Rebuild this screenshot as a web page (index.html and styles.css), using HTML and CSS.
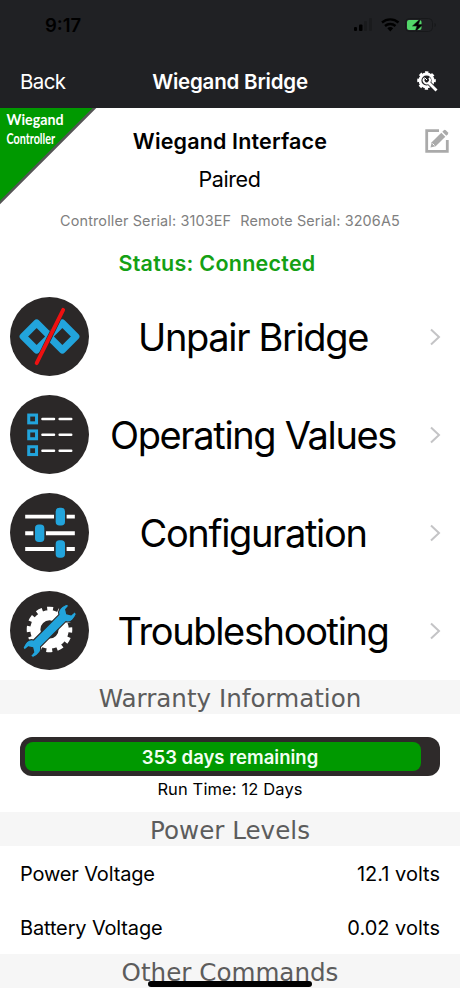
FILE: index.html
```html
<!DOCTYPE html>
<html lang="en">
<head>
    <meta charset="UTF-8">
    <meta name="viewport" content="width=device-width, initial-scale=1.0">
    <title>Wiegand Bridge</title>
    <link rel="stylesheet" href="styles.css">
</head>
<body>

    <div class="app">
        <header class="header">
            <div class="status-bar">
                <span class="time">9:17</span>
                <svg class="status-icons" width="86" height="18" viewBox="0 0 86 18">
                    <rect x="2" y="11" width="3" height="4" rx="1" fill="#000"/>
                    <rect x="7" y="8.500" width="3.500" height="6.500" rx="1" fill="#000"/>
                    <rect x="12" y="5" width="3" height="10" rx="1" fill="#1a1b1d"/>
                    <rect x="17" y="2" width="3" height="13" rx="1" fill="#1a1b1d"/>
                    <g fill="none" stroke="#000" stroke-width="2.400">
                        <path d="M30 6.500a12.500 12.500 0 0 1 16.500 0"/>
                        <path d="M33 10a8 8 0 0 1 10.500 0"/>
                    </g>
                    <path d="M35.300 12.300a4.500 4.500 0 0 1 5.900 0l-2.950 3.200z" fill="#000"/>
                    <rect x="53.500" y="2.500" width="27" height="13" rx="4" fill="none" stroke="#17181a"/>
                    <path d="M82.500 7v4q1.500-.7 1.500-2t-1.500-2z" fill="#17181a"/>
                    <rect x="55" y="4" width="14.500" height="10" rx="2" fill="#52d769"/>
                    <path d="M68.500 2.500l-8 7.500h4.500l-2 6 8-7.500h-4.500z" fill="#000" stroke="#202124" stroke-width=".6"/>
                </svg>
            </div>
            <div class="nav-bar">
                <a class="back">Back</a>
                <h1>Wiegand Bridge</h1>
                <svg class="settings" width="21" height="21" viewBox="0 0 21 21">
                    <circle cx="9.500" cy="9.500" r="6.500" fill="none" stroke="#fff" stroke-width="2.800"/>
                    <circle cx="9.500" cy="9.500" r="8.200" fill="none" stroke="#fff" stroke-width="2.200" stroke-dasharray="3.300 3.140" stroke-dashoffset="1.650"/>
                    <path d="M10.500 10.500L19 19" stroke="#202124" stroke-width="4.500"/>
                    <path d="M11 11l8.500 8.500" stroke="#fff" stroke-width="2.800"/>
                    <path d="M7.200 7.300a3.200 3.200 0 1 0 4.800-.4" fill="none" stroke="#fff" stroke-width="1.800"/>
                    <path d="M7.500 6.500l2.500 2.500" stroke="#fff" stroke-width="1"/>
                </svg>
            </div>
        </header>

        <section class="device">
            <svg class="corner" width="97" height="97" viewBox="0 0 97 97">
                <path d="M0 0H94L0 94z" fill="#009900"/>
                <path d="M95.500-1L-1 95.500" stroke="#555" stroke-width="2.600"/>
                <text x="6.500" y="17" textLength="57" lengthAdjust="spacingAndGlyphs">Wiegand</text>
                <text x="6.500" y="35.500" textLength="48.500" lengthAdjust="spacingAndGlyphs">Controller</text>
            </svg>
            <svg class="edit" width="24" height="24" viewBox="0 0 24 24">
                <path d="M14 1.700H1.700v20.600h20.600V11" fill="none" stroke="#aaa" stroke-width="2.800"/>
                <path d="M5.500 18.500l1.200-5.200 9.600-9.600 4 4-9.600 9.600z" fill="#aaa"/>
                <path d="M17.300 2.700l1.500-1.500q1-.9 2 0l2 2q.9 1 0 2l-1.500 1.500z" fill="#aaa"/>
                <path d="M7.500 14.500l2 2" stroke="#fff" stroke-width="1"/>
            </svg>
            <h2>Wiegand Interface</h2>
            <p class="paired">Paired</p>
            <p class="serials"><span>Controller Serial: 3103EF</span><span>Remote Serial: 3206A5</span></p>
            <p class="status">Status: Connected</p>
        </section>

        <nav class="menu">
            <a class="menu-item">
                <svg class="menu-icon" viewBox="0 0 78 78">
                    <circle cx="39" cy="39" r="39" fill="#2b2828"/>
                    <g fill="none" stroke="#22a4dc" stroke-width="7" stroke-linejoin="round">
                        <path d="M13 39l13.300-13.300L39.600 39 26.300 52.300z"/>
                        <path d="M38.400 39l13.300-13.300L65 39 51.700 52.300z"/>
                    </g>
                    <path d="M52.500 12.500L26.300 65.700" stroke="#2b2828" stroke-width="5"/>
                    <path d="M52.500 12.700L26.300 65.300" stroke="#ee1111" stroke-width="3.800" stroke-linecap="round"/>
                </svg>
                <span class="menu-label">Unpair Bridge</span>
                <svg class="chevron" viewBox="0 0 12 18"><path d="M2 1.500L10 9l-8 7.500"/></svg>
            </a>
            <a class="menu-item">
                <svg class="menu-icon" viewBox="0 0 78 78">
                    <circle cx="39" cy="39" r="39" fill="#2b2828"/>
                    <g fill="none" stroke="#22a4dc" stroke-width="3">
                        <rect x="18.500" y="19.800" width="7.700" height="7.700"/>
                        <rect x="18.500" y="35.500" width="7.700" height="7.700"/>
                        <rect x="18.500" y="51.100" width="7.700" height="7.700"/>
                    </g>
                    <path d="M32 23.700h11.500M49 23.700h11.500M32 39.300h11.500M49 39.300h11.500M32 55h11.500M49 55h11.500" stroke="#fff" stroke-width="2.400" stroke-linecap="round"/>
                </svg>
                <span class="menu-label">Operating Values</span>
                <svg class="chevron" viewBox="0 0 12 18"><path d="M2 1.500L10 9l-8 7.500"/></svg>
            </a>
            <a class="menu-item">
                <svg class="menu-icon" viewBox="0 0 78 78">
                    <circle cx="39" cy="39" r="39" fill="#2b2828"/>
                    <path d="M15 23.300h49M15 39.700h49M15 55.300h49" stroke="#fff" stroke-width="3.800"/>
                    <g fill="#22a4dc" stroke="#2b2828" stroke-width="1.600">
                        <rect x="44.300" y="13.800" width="10.800" height="19" rx="4.500"/>
                        <rect x="23.900" y="30.200" width="10.800" height="19" rx="4.500"/>
                        <rect x="44.300" y="45.800" width="10.800" height="19" rx="4.500"/>
                    </g>
                </svg>
                <span class="menu-label">Configuration</span>
                <svg class="chevron" viewBox="0 0 12 18"><path d="M2 1.500L10 9l-8 7.500"/></svg>
            </a>
            <a class="menu-item">
                <svg class="menu-icon" viewBox="0 0 78 78">
                    <circle cx="39" cy="39" r="39" fill="#2b2828"/>
                    <circle cx="39" cy="38" r="14" fill="none" stroke="#fff" stroke-width="10"/>
                    <circle cx="39" cy="38" r="20" fill="none" stroke="#fff" stroke-width="5" stroke-dasharray="5.800 4.672" stroke-dashoffset="2.900"/>
                    <path transform="translate(39.200 39.300) rotate(-45) scale(.93)" fill="#22a4dc" stroke="#2b2828" stroke-width="1.200"
                        d="M-19-5.200H19C21-9 26-10 32.500-7.500L33.500-4.500 28-4 25.500 0 28 4 33.500 4.500 32.500 7.500C26 10 21 9 19 5.200H-19C-21 9-26 10-32.500 7.500L-33.500 4.500-28 4-25.500 0-28-4-33.500-4.500-32.500-7.500C-26-10-21-9-19-5.200z"/>
                </svg>
                <span class="menu-label">Troubleshooting</span>
                <svg class="chevron" viewBox="0 0 12 18"><path d="M2 1.500L10 9l-8 7.500"/></svg>
            </a>
        </nav>

        <h3 class="section-title">Warranty Information</h3>
        <section class="warranty">
            <div class="progress">
                <div class="progress-fill" style="width: 96.7%"></div>
                <span class="progress-label">353 days remaining</span>
            </div>
            <p class="run-time">Run Time: 12 Days</p>
        </section>

        <h3 class="section-title">Power Levels</h3>
        <section class="levels">
            <div class="level-row"><span>Power Voltage</span><span class="value">12.1 volts</span></div>
            <div class="level-row"><span>Battery Voltage</span><span class="value">0.02 volts</span></div>
        </section>

        <h3 class="section-title">Other Commands</h3>
        <div class="home-indicator"></div>
    </div>

</body>
</html>
```
FILE: styles.css
```css
* {
    box-sizing: border-box;
}

body {
    font-family: Inter, "Liberation Sans", sans-serif;
    background-color: #fff;
    color: #000;
    margin: 0;
    padding: 0;
}

h1, h2, h3, p {
    margin: 0;
}

svg {
    display: block;
}

.app {
    position: relative;
    width: 460px;
    height: 996px;
    overflow: hidden;
}

.header {
    height: 108px;
    background-color: #202124;
}

.status-bar {
    display: flex;
    justify-content: space-between;
    align-items: center;
    height: 54px;
    padding: 0 22px 4px 45px;
}

.time {
    font-size: 18.5px;
    font-weight: 600;
}

.nav-bar {
    display: grid;
    grid-template-columns: 100px 1fr 100px;
    align-items: center;
    height: 54px;
    padding: 0 20px;
    color: #fff;
}

.back {
    font-size: 20.5px;
    letter-spacing: -0.6px;
}

.nav-bar h1 {
    font-size: 20.5px;
    font-weight: 600;
    letter-spacing: -0.2px;
    text-align: center;
    white-space: nowrap;
}

.settings {
    justify-self: end;
    margin-right: 2px;
}

.device {
    position: relative;
    height: 179px;
    padding-top: 14px;
    text-align: center;
}

.corner {
    position: absolute;
    top: 0;
    left: 0;
}

.corner text {
    font-family: Lato, sans-serif;
    font-size: 14.8px;
    font-weight: 700;
    fill: #fff;
}

.edit {
    position: absolute;
    top: 21px;
    right: 11px;
}

.device h2 {
    font-size: 21.5px;
    font-weight: 600;
    letter-spacing: 0.15px;
    line-height: 38px;
}

.paired {
    padding-right: 1px;
    font-size: 21.5px;
    letter-spacing: -0.4px;
    line-height: 38px;
}

.serials {
    display: flex;
    justify-content: center;
    gap: 9px;
    font-size: 14.4px;
    letter-spacing: 0.15px;
    line-height: 45px;
    color: #808080;
}

.status {
    padding-right: 26px;
    font-size: 21.5px;
    font-weight: 600;
    letter-spacing: 0.25px;
    line-height: 40px;
    color: #14a014;
}

.menu-item {
    display: flex;
    align-items: center;
    height: 98px;
    padding: 0 19px 0 10px;
}

.menu-icon {
    width: 79px;
    height: 79px;
}

.menu-label {
    flex: 1;
    padding-top: 2px;
    font-size: 38px;
    letter-spacing: -1.35px;
    text-align: center;
    white-space: nowrap;
}

.chevron {
    width: 12px;
    height: 20px;
    margin-left: 12px;
    padding-top: 2px;
    fill: none;
    stroke: #c4c4c6;
    stroke-width: 2;
}

.section-title {
    height: 34px;
    background-color: #f6f6f6;
    font-family: "DejaVu Sans", sans-serif;
    font-size: 24.6px;
    font-weight: 400;
    line-height: 38px;
    text-align: center;
    color: #5c5c5c;
}

.menu + .section-title {
    margin-top: 1px;
}

.warranty {
    height: 98px;
    padding: 23px 20px 0;
}

.progress {
    position: relative;
    height: 39px;
    padding: 5px;
    border-radius: 12px;
    background-color: #2e2a2a;
}

.progress-fill {
    height: 29px;
    border-radius: 8px;
    background-color: #009900;
}

.progress-label {
    position: absolute;
    inset: 0;
    font-size: 18.5px;
    font-weight: 600;
    line-height: 40px;
    text-align: center;
    color: #f2fff2;
}

.run-time {
    font-size: 16.5px;
    letter-spacing: 0.12px;
    line-height: 27px;
    text-align: center;
}

.level-row {
    display: flex;
    justify-content: space-between;
    align-items: center;
    height: 54px;
    padding: 2px 20px 0;
    font-size: 20px;
    letter-spacing: -0.15px;
}

.level-row .value {
    letter-spacing: 0;
}

.home-indicator {
    position: absolute;
    left: 148px;
    bottom: 9px;
    width: 164px;
    height: 6px;
    border-radius: 3px;
    background-color: #000;
}
```
